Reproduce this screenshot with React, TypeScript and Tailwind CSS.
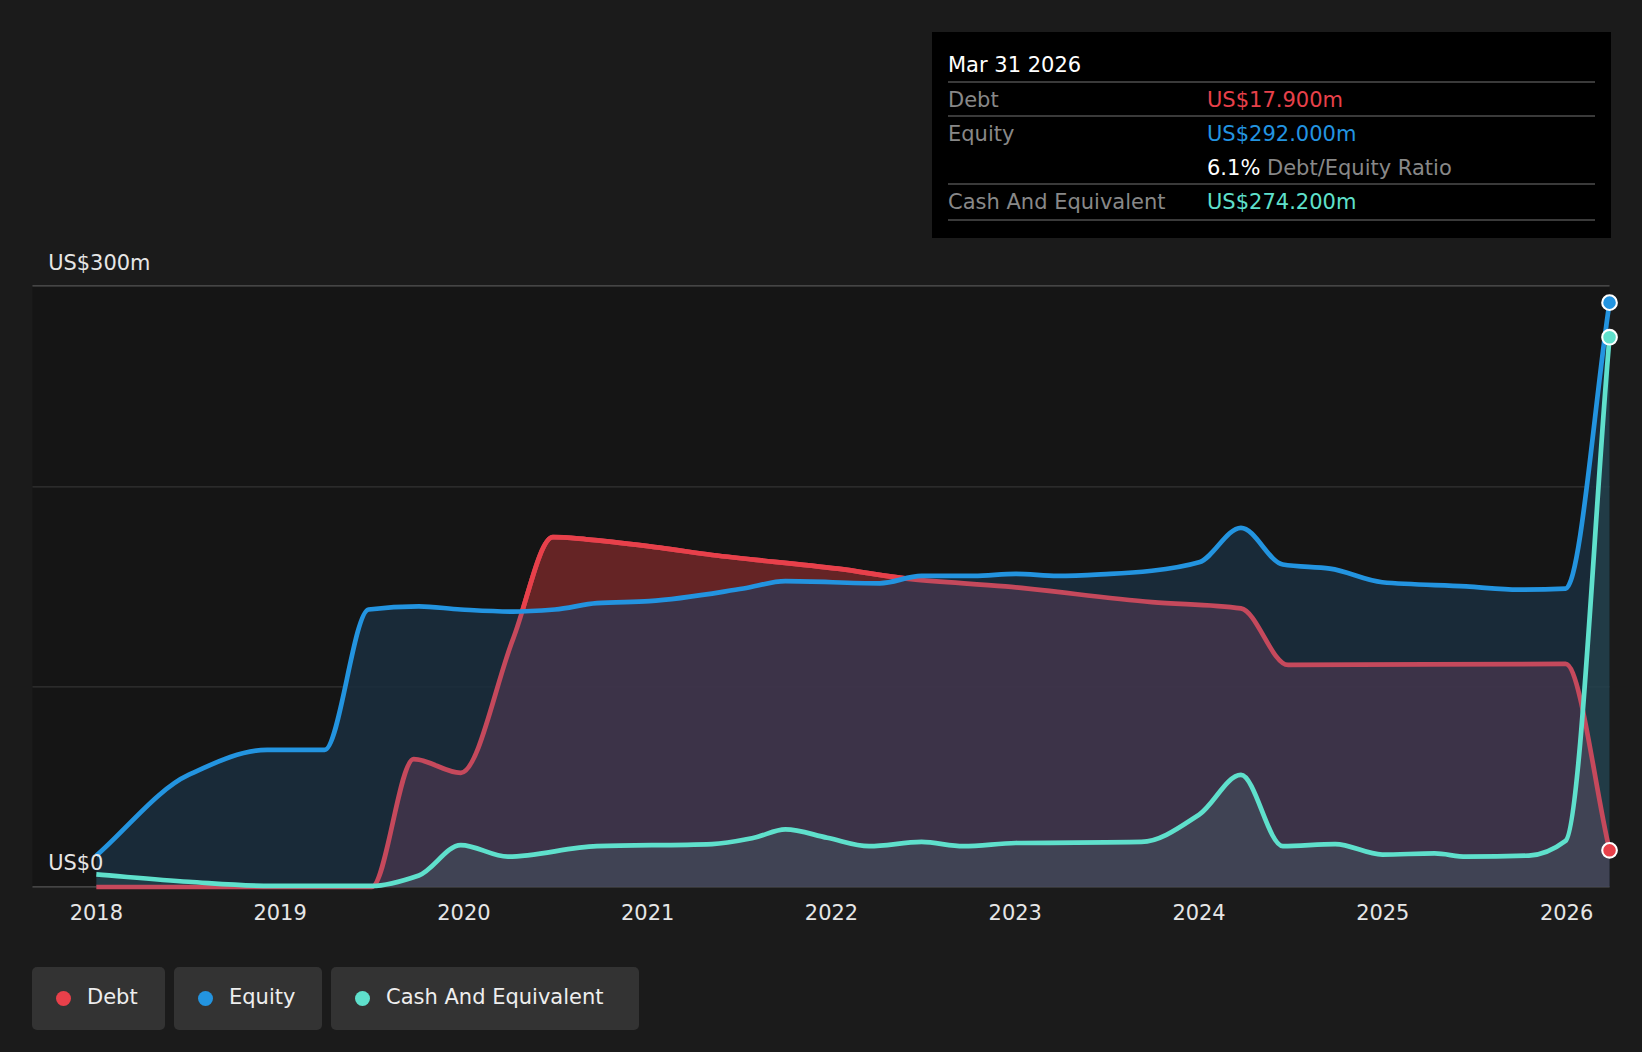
import React from "react";

type P = [number, number];
const smooth = (pts: P[]) => {
  const n = pts.length;
  const dx: number[] = [], m: number[] = [];
  for (let i = 0; i < n - 1; i++) { dx.push(pts[i + 1][0] - pts[i][0]); m.push((pts[i + 1][1] - pts[i][1]) / dx[i]); }
  const t: number[] = [m[0]];
  for (let i = 1; i < n - 1; i++) {
    if (m[i - 1] * m[i] <= 0) t.push(0);
    else { const w1 = 2 * dx[i] + dx[i - 1], w2 = dx[i] + 2 * dx[i - 1]; t.push((w1 + w2) / (w1 / m[i - 1] + w2 / m[i])); }
  }
  t.push(m[n - 2]);
  let d = `M${pts[0][0]},${pts[0][1]}`;
  for (let i = 0; i < n - 1; i++) {
    const h = dx[i] / 3;
    d += ` C${pts[i][0] + h},${pts[i][1] + t[i] * h} ${pts[i + 1][0] - h},${pts[i + 1][1] - t[i + 1] * h} ${pts[i + 1][0]},${pts[i + 1][1]}`;
  }
  return d;
};
const equity: P[] = [[92,817],[180,740],[255,716],[310,716],[352,582],[400,579],[440,582],[490,584],[530,582],[570,576],[620,574],[710,562],[750,555],[840,557],[880,550],[930,550],[970,548],[1010,550],[1060,548],[1100,545],[1145,537],[1185,504],[1225,539],[1270,543],[1320,556],[1400,560],[1450,563],[1495,562],[1537,289]];
const debt: P[] = [[92,847],[355,847],[395,725],[440,738],[490,610],[528,513],[560,515],[630,523],[680,530],[800,543],[870,553],[960,560],[1100,575],[1185,581],[1230,635],[1495,634],[1537,812]];
const cash: P[] = [[92,835],[180,842],[260,846],[355,846],[400,836],[440,807],[485,818],[570,808],[680,806],[720,800],[750,792],[790,800],[830,808],[880,804],[920,808],[970,805],[1090,804],[1145,778],[1185,740],[1225,808],[1275,806],[1320,816],[1370,815],[1400,818],[1460,817],[1495,803],[1537,322]];
const eqD = smooth(equity), dbD = smooth(debt), caD = smooth(cash);
const area = (d: string) => `${d} L1537,847 L92,847 Z`;
const years = [2018,2019,2020,2021,2022,2023,2024,2025,2026];
const F = "'DejaVu Sans', sans-serif";

export default function App() {
  return (
    <div className="relative w-[1642px] h-[1052px] bg-[#1b1b1b] flex flex-col" style={{ fontFamily: F }}>
      <svg width="1642" height="942.5" viewBox="0 0 1568 900" className="block">
        <defs>
          <clipPath id="above"><path d={`${eqD} L1537,0 L92,0 Z`} /></clipPath>
        </defs>
        <rect x="31" y="273" width="1506" height="574" fill="#151515" />
        {[273, 465, 656].map(y => <line key={y} x1="31" x2="1537" y1={y} y2={y} stroke={y === 273 ? "#555" : "#333"} strokeWidth="1.2" />)}
        <line x1="31" x2="1537" y1="847" y2="847" stroke="#555" strokeWidth="1.2" />
        <path d={area(eqD)} fill="#1a2e3e" fillOpacity="0.85" />
        <path d={area(dbD)} fill="#5a3b55" fillOpacity="0.55" />
        <path d={area(dbD)} fill="#6a2323" fillOpacity="0.9" clipPath="url(#above)" />
        <path d={area(caD)} fill="#6fd8c8" fillOpacity="0.1" />
        <path d={dbD} fill="none" stroke="#c5495c" strokeWidth="4.5" strokeLinejoin="round" />
        <path d={dbD} fill="none" stroke="#e8404a" strokeWidth="4.5" strokeLinejoin="round" clipPath="url(#above)" />
        <path d={eqD} fill="none" stroke="#2394e0" strokeWidth="4.5" strokeLinejoin="round" />
        <path d={caD} fill="none" stroke="#5fe0cc" strokeWidth="4.5" strokeLinejoin="round" />
        <circle cx="1537" cy="289" r="7" fill="#2394e0" stroke="#fff" strokeWidth="2" />
        <circle cx="1537" cy="322" r="7" fill="#5fe0cc" stroke="#fff" strokeWidth="2" />
        <circle cx="1537" cy="812" r="7" fill="#e8404a" stroke="#fff" strokeWidth="2" />
        <text x="46" y="258" fill="#e6e6e6" fontSize="20" fontFamily={F}>US$300m</text>
        <text x="46" y="831" fill="#e6e6e6" fontSize="20" fontFamily={F}>US$0</text>
        {years.map((y, i) => (
          <text key={y} x={92 + i * 175.5} y="879" fill="#e6e6e6" fontSize="20" textAnchor="middle" fontFamily={F}>{y}</text>
        ))}
      </svg>
      <div className="absolute left-[932px] top-[32px] w-[679px] h-[206px] bg-black px-[16px] pt-[16px] text-[21px] leading-[34px]">
        <div className="text-white h-[35px] border-b-2 border-[#3a3a3a]">Mar 31 2026</div>
        <div className="flex h-[34px] border-b-2 border-[#3a3a3a]"><span className="w-[259px] text-[#888]">Debt</span><span className="text-[#e8404a]">US$17.900m</span></div>
        <div className="flex h-[34px]"><span className="w-[259px] text-[#888]">Equity</span><span className="text-[#2394e0]">US$292.000m</span></div>
        <div className="flex h-[34px] border-b-2 border-[#3a3a3a]"><span className="w-[259px]"></span><span className="text-white">6.1% <span className="text-[#888]">Debt/Equity Ratio</span></span></div>
        <div className="flex h-[36px] border-b-2 border-[#3a3a3a]"><span className="w-[259px] text-[#888]">Cash And Equivalent</span><span className="text-[#5fe0cc]">US$274.200m</span></div>
      </div>
      <div className="flex gap-[9px] pl-[32px] mt-[24px] text-[21px] text-[#eee]">
        {[["Debt", "#e8404a", "w-[133px]"], ["Equity", "#2394e0", "w-[148px]"], ["Cash And Equivalent", "#5fe0cc", "w-[308px]"]].map(([l, c, w]) => (
          <div key={l} className={`${w} h-[63px] rounded-[5px] bg-[#333333] flex items-center gap-[16px] pl-[24px]`}>
            <span className="w-[15px] h-[15px] rounded-full" style={{ background: c }} />
            <span>{l}</span>
          </div>
        ))}
      </div>
    </div>
  );
}
